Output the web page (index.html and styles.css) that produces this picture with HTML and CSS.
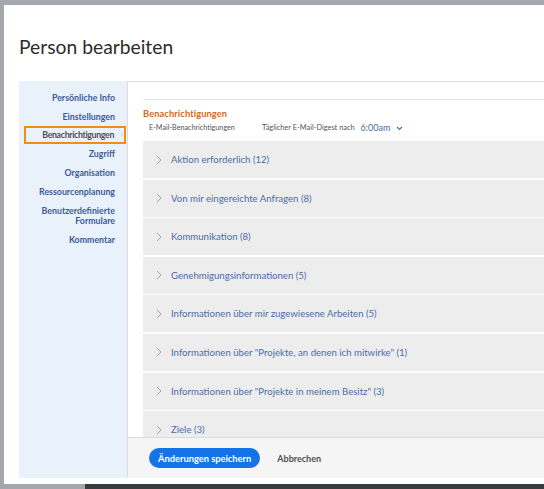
FILE: index.html
```html
<!DOCTYPE html>
<html lang="de">
<head>
<meta charset="utf-8">
<title>Person bearbeiten</title>
<link rel="stylesheet" href="styles.css">
</head>
<body>
<div class="backdrop">
  <div class="modal">
    <h1 class="title">Person bearbeiten</h1>
    <div class="body">
      <nav class="sidebar">
        <a class="nav-item">Persönliche Info</a>
        <a class="nav-item">Einstellungen</a>
        <a class="nav-item active">Benachrichtigungen<span class="caret">‹</span></a>
        <a class="nav-item">Zugriff</a>
        <a class="nav-item">Organisation</a>
        <a class="nav-item">Ressourcenplanung</a>
        <a class="nav-item">Benutzerdefinierte<br>Formulare</a>
        <a class="nav-item">Kommentar</a>
      </nav>
      <main class="main">
        <div class="scroll">
          <section class="section">
            <h2 class="section-title">Benachrichtigungen</h2>
            <div class="subline">
              <span class="sub-left">E-Mail-Benachrichtigungen</span>
              <span class="sub-digest">Täglicher E-Mail-Digest nach</span>
              <span class="time">6:00am</span>
              <svg class="dd" width="7" height="5" viewBox="0 0 7 5"><polyline points="1,1 3.5,3.5 6,1" fill="none" stroke="#4b6ea8" stroke-width="1.1"/></svg>
            </div>
            <div class="rows">
              <div class="row"><svg class="chev" width="6" height="10" viewBox="0 0 6 10"><polyline points="1,1 5,5 1,9" fill="none" stroke="#9aa3b0" stroke-width="1"/></svg><span>Aktion erforderlich (12)</span></div>
              <div class="row"><svg class="chev" width="6" height="10" viewBox="0 0 6 10"><polyline points="1,1 5,5 1,9" fill="none" stroke="#9aa3b0" stroke-width="1"/></svg><span>Von mir eingereichte Anfragen (8)</span></div>
              <div class="row"><svg class="chev" width="6" height="10" viewBox="0 0 6 10"><polyline points="1,1 5,5 1,9" fill="none" stroke="#9aa3b0" stroke-width="1"/></svg><span>Kommunikation (8)</span></div>
              <div class="row"><svg class="chev" width="6" height="10" viewBox="0 0 6 10"><polyline points="1,1 5,5 1,9" fill="none" stroke="#9aa3b0" stroke-width="1"/></svg><span>Genehmigungsinformationen (5)</span></div>
              <div class="row"><svg class="chev" width="6" height="10" viewBox="0 0 6 10"><polyline points="1,1 5,5 1,9" fill="none" stroke="#9aa3b0" stroke-width="1"/></svg><span>Informationen über mir zugewiesene Arbeiten (5)</span></div>
              <div class="row"><svg class="chev" width="6" height="10" viewBox="0 0 6 10"><polyline points="1,1 5,5 1,9" fill="none" stroke="#9aa3b0" stroke-width="1"/></svg><span>Informationen über "Projekte, an denen ich mitwirke" (1)</span></div>
              <div class="row"><svg class="chev" width="6" height="10" viewBox="0 0 6 10"><polyline points="1,1 5,5 1,9" fill="none" stroke="#9aa3b0" stroke-width="1"/></svg><span>Informationen über "Projekte in meinem Besitz" (3)</span></div>
              <div class="row"><svg class="chev" width="6" height="10" viewBox="0 0 6 10"><polyline points="1,1 5,5 1,9" fill="none" stroke="#9aa3b0" stroke-width="1"/></svg><span>Ziele (3)</span></div>
            </div>
          </section>
        </div>
        <footer class="footer">
          <button class="btn-primary">Änderungen speichern</button>
          <button class="btn-link">Abbrechen</button>
        </footer>
      </main>
    </div>
  </div>
  <div class="bottom-strip"><span class="strip-light"></span><span class="strip-dark"></span></div>
</div>
</body>
</html>
```
FILE: styles.css
```css
* { box-sizing: border-box; }
html, body { margin: 0; padding: 0; }
body {
  width: 544px;
  height: 489px;
  overflow: hidden;
  background: #a4a7ae;
  font-family: Lato, "Open Sans", sans-serif;
}
.backdrop {
  padding: 5px 0 0 4px;
  display: flex;
  flex-direction: column;
  height: 489px;
}
.modal {
  background: #ffffff;
  width: 560px;
  height: 479px;
  padding: 0 0 6px 15px;
  display: flex;
  flex-direction: column;
  flex: none;
}
.title {
  margin: 0;
  height: 76px;
  padding-top: 29px;
  font-family: Lato, sans-serif;
  font-weight: 400;
  font-size: 19.3px;
  line-height: 26px;
  color: #2c2c2c;
}
.body {
  flex: 1;
  display: flex;
  min-height: 0;
}
.sidebar {
  width: 108px;
  flex: none;
  background: #e9f2fa;
  padding: 11.5px 0 0 0;
  display: flex;
  flex-direction: column;
  align-items: stretch;
}
.nav-item {
  display: block;
  text-align: right;
  padding: 0 12px 0 4px;
  font-size: 8.8px;
  font-weight: 700;
  color: #3b5a9a;
  line-height: 9.5px;
  margin-bottom: 9.5px;
  position: relative;
  white-space: nowrap;
}
.nav-item.active {
  color: #505050;
  margin: -5px 1px 5px 5px;
  padding: 2.5px 10px 2.5px 0;
  border: 2px solid #f28c13;
  letter-spacing: -0.35px;
}
.caret {
  position: absolute;
  right: 1px;
  top: 1px;
  color: #c0c4ca;
  font-weight: 400;
  font-size: 10px;
  letter-spacing: 0;
}
.main {
  flex: 1;
  display: flex;
  flex-direction: column;
  border-top: 1px solid #dedede;
  border-left: 1px solid #dcdcdc;
  min-width: 0;
}
.scroll {
  flex: 1;
  overflow: hidden;
  padding: 17px 0 0 15px;
}
.section {
  border-top: 1px solid #e3e3e3;
}
.section-title {
  margin: 0;
  padding-top: 8px;
  font-size: 9.2px;
  font-weight: 700;
  color: #d0681d;
  line-height: 12px;
  letter-spacing: 0.15px;
}
.subline {
  display: flex;
  align-items: center;
  height: 15px;
  padding-left: 6px;
  font-size: 7.2px;
  color: #555;
}
.sub-left { width: 113px; }
.sub-digest { margin-right: 6px; font-size: 7.4px; }
.time {
  color: #4b6ea8;
  font-size: 9px;
  margin-right: 6px;
}
.dd { margin-top: 1px; }
.rows {
  margin-top: 6px;
  display: flex;
  flex-direction: column;
  gap: 1.6px;
}
.row {
  height: 37px;
  background: #ededed;
  display: flex;
  align-items: center;
  padding-left: 13px;
  flex: none;
}
.chev { margin-right: 9px; }
.row span {
  font-size: 9.6px;
  color: #4b6ea8;
}
.footer {
  height: 41px;
  flex: none;
  background: #f5f5f5;
  border-top: 1px solid #dcdcdc;
  display: flex;
  align-items: center;
  padding-left: 21px;
}
.btn-primary {
  background: #1473e6;
  color: #fff;
  border: none;
  border-radius: 11px;
  height: 20px;
  padding: 0 9px;
  font-family: Lato, sans-serif;
  font-weight: 700;
  font-size: 9.3px;
  margin-right: 17px;
}
.btn-link {
  background: none;
  border: none;
  padding: 0;
  font-family: Lato, sans-serif;
  font-weight: 700;
  font-size: 9px;
  color: #505050;
}
.bottom-strip {
  display: flex;
  height: 5px;
  margin-left: -4px;
}
.strip-light { width: 85px; background: #a4a7ae; }
.strip-dark { flex: 1; background: #3a3b3f; }
```
